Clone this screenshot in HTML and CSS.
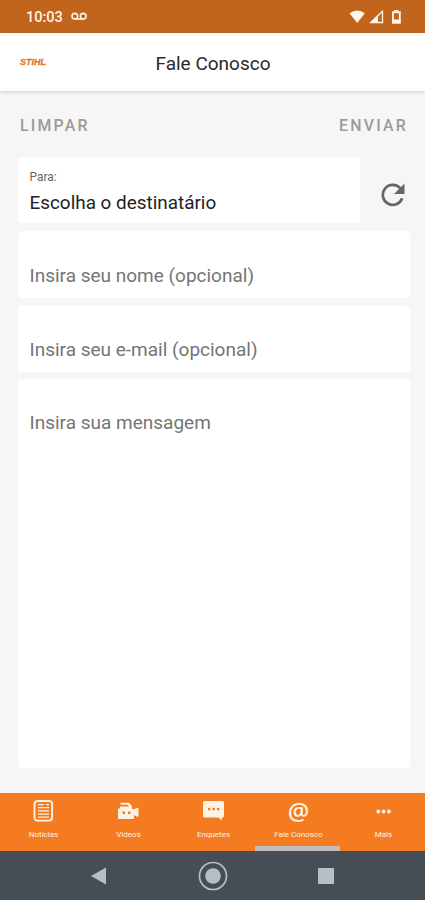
FILE: index.html
```html
<!DOCTYPE html>
<html lang="pt-BR">
<head>
<meta charset="utf-8">
<meta name="viewport" content="width=device-width">
<title>Fale Conosco</title>
<link rel="stylesheet" href="styles.css">
</head>
<body>
<div class="status">
  <span class="clock">10:03</span>
  <svg class="voicemail" width="16" height="9" viewBox="0 0 16 9"><g fill="none" stroke="currentColor" stroke-width="1.6"><circle cx="3.8" cy="4.2" r="2.8"/><circle cx="12.2" cy="4.2" r="2.8"/><path d="M3.8 7h8.4"/></g></svg>
  <svg class="signals" width="54" height="16" viewBox="0 0 54 16">
    <path fill="currentColor" d="M1.500 4.200Q9.200-1.200 16.900 4.200L9.200 14z"/>
    <path fill="none" stroke="currentColor" stroke-width="1.300" d="M23 13.500L34.500 2.200V13.500z"/>
    <path fill="currentColor" d="M21.500 14L30 5.500V14z"/>
    <path fill="none" stroke="currentColor" stroke-width="1.900" d="M45 3.300h6.800v10.300H45z"/>
    <path fill="currentColor" d="M46.300 1h4.200v2h-4.200zM44.300 10.500h8v4h-8z"/>
  </svg>
</div>
<header class="header">
  <span class="logo">STIHL</span>
  <h1 class="title">Fale Conosco</h1>
</header>
<main class="content">
  <div class="actions"><span class="clear">LIMPAR</span><span class="send">ENVIAR</span></div>
  <div class="recipient">
    <div class="field to">
      <span class="label">Para:</span>
      <span class="value">Escolha o destinatário</span>
    </div>
    <svg class="refresh" width="24" height="24" viewBox="0 0 24 24"><path fill="none" stroke="currentColor" stroke-width="2.700" d="M21.200 15.300A10 10 0 1 1 19.300 5.200"/><path fill="currentColor" d="M23.500 0.500V11H13z"/></svg>
  </div>
  <div class="field name"><span class="hint">Insira seu nome (opcional)</span></div>
  <div class="field email"><span class="hint">Insira seu e-mail (opcional)</span></div>
  <div class="field message"><span class="hint">Insira sua mensagem</span></div>
</main>
<nav class="tabs">
  <div class="tab">
    <svg class="icon" width="24" height="24" viewBox="0 0 24 24"><rect x="2.500" y="2" width="17.600" height="19.600" rx="3" fill="none" stroke="currentColor" stroke-width="1.900"/><path stroke="currentColor" stroke-width="1.300" d="M6 5.700h6M6 8.700h11M6 11.900h11M6 15.100h11M6 18.200h11M14 5.700h3"/></svg>
    <span>Notícias</span>
  </div>
  <div class="tab">
    <svg class="icon" width="24" height="24" viewBox="0 0 24 24"><path fill="currentColor" fill-rule="evenodd" d="M1 9.500h2V7.500h9L10.500 5.700H3.500V3.700h8.500L15 7v3h2.500l4-1.500v9h-2l-2.500-1.500V20H1zM5.500 12.500v2.500h2.500v-2.500zm5.500 0v2.500h2.500v-2.500z"/></svg>
    <span>Vídeos</span>
  </div>
  <div class="tab">
    <svg class="icon" width="24" height="24" viewBox="0 0 24 24"><path fill="currentColor" fill-rule="evenodd" d="M2.500 2h18q1.500 0 1.500 1.500V17q0 1.500-1.500 1.500h-.5V21.500L16.500 18.500h-14Q1 18.500 1 17V3.500Q1 2 2.500 2zM6 9v2.300h2.300V9zm4.500 0v2.300h2.300V9zm4.500 0v2.300h2.300V9z"/></svg>
    <span>Enquetes</span>
  </div>
  <div class="tab active">
    <span class="icon at">@</span>
    <span>Fale Conosco</span>
  </div>
  <div class="tab">
    <svg class="icon" width="24" height="24" viewBox="0 0 24 24"><g fill="currentColor"><circle cx="6.300" cy="12.500" r="1.900"/><circle cx="11.600" cy="12.500" r="1.900"/><circle cx="16.900" cy="12.500" r="1.900"/></g></svg>
    <span>Mais</span>
  </div>
</nav>
<div class="system">
  <svg width="16" height="18" viewBox="0 0 16 18"><path fill="currentColor" d="M0 9L15 .5v17z"/></svg>
  <svg width="30" height="30" viewBox="0 0 30 30"><circle cx="15" cy="15" r="13.500" fill="none" stroke="currentColor" stroke-width="1.700"/><circle cx="15" cy="15" r="7.800" fill="currentColor"/></svg>
  <svg width="16" height="16" viewBox="0 0 16 16"><rect width="16" height="16" rx="1" fill="currentColor"/></svg>
</div>
</body>
</html>
```
FILE: styles.css
```css
* { box-sizing: border-box; }
body {
  margin: 0;
  height: 900px;
  display: flex;
  flex-direction: column;
  overflow: hidden;
  background: #f6f6f6;
  font-family: Roboto, "Liberation Sans", sans-serif;
}
svg { display: block; flex: none; }
.status {
  height: 33px;
  flex: none;
  display: flex;
  align-items: center;
  padding: 0 23px 0 26px;
  background: #c1651d;
  color: #fff4ea;
}
.clock { width: 45px; font-size: 14.5px; font-weight: 500; line-height: 33px; padding-top: 1px; }
.signals { margin-left: auto; }
.header {
  height: 58px;
  flex: none;
  display: grid;
  grid-template-columns: 1fr auto 1fr;
  align-items: center;
  padding: 0 20px;
  background: #fff;
  box-shadow: 0 1px 4px rgba(0, 0, 0, .18);
}
.logo {
  color: #e5761f;
  font: italic 700 9px/10px "Liberation Sans", sans-serif;
  -webkit-text-stroke: .3px #e5761f;
}
.title { margin: 0; font-size: 19px; font-weight: 400; line-height: 24px; color: #292929; padding: 3px 0 0 1px; }
.content {
  flex: 1;
  display: flex;
  flex-direction: column;
  padding: 0 15.5px 25px 17.5px;
}
.actions {
  height: 66px;
  flex: none;
  display: flex;
  justify-content: space-between;
  padding: 25px 1.5px 0 2.5px;
  font-size: 15.9px;
  font-weight: 500;
  line-height: 20px;
  letter-spacing: 2.2px;
  color: #9b9b9b;
}
.recipient { display: flex; align-items: center; justify-content: space-between; margin-bottom: 8px; padding-right: 5px; }
.field { background: #fff; border-radius: 4px; padding-left: 12px; }
.to { width: 342.500px; height: 66px; display: flex; flex-direction: column; padding-top: 12px; }
.label { font-size: 11.9px; line-height: 16px; color: #666; }
.value { font-size: 18.9px; line-height: 24px; margin-top: 6px; color: #222; white-space: nowrap; }
.refresh { color: #666; margin-top: 9px; }
.hint { display: block; font-size: 19px; line-height: 24px; color: #757575; white-space: nowrap; }
.name { height: 67px; margin-bottom: 7.5px; padding-top: 33px; }
.email { height: 66px; margin-bottom: 7px; padding-top: 32px; }
.message { flex: 1; padding-top: 32px; }
.tabs { height: 58px; flex: none; display: grid; grid-template-columns: repeat(5, 1fr); background: #f47b20; color: #fff2e5; }
.tab {
  display: flex;
  flex-direction: column;
  align-items: center;
  padding: 6px 0 0 2px;
  font-size: 8px;
  line-height: 10px;
  gap: 7px;
  border-bottom: 5px solid transparent;
  background-clip: padding-box;
  white-space: nowrap;
}
.active { border-bottom-color: #bfbdbd; }
.at { height: 24px; font-family: "Open Sans", sans-serif; font-size: 24px; font-weight: 600; line-height: 23px; }
.system {
  height: 49px;
  flex: none;
  display: flex;
  align-items: center;
  justify-content: space-between;
  padding: 1px 91px 0;
  background: #454e54;
  color: #b9bec2;
}
```
